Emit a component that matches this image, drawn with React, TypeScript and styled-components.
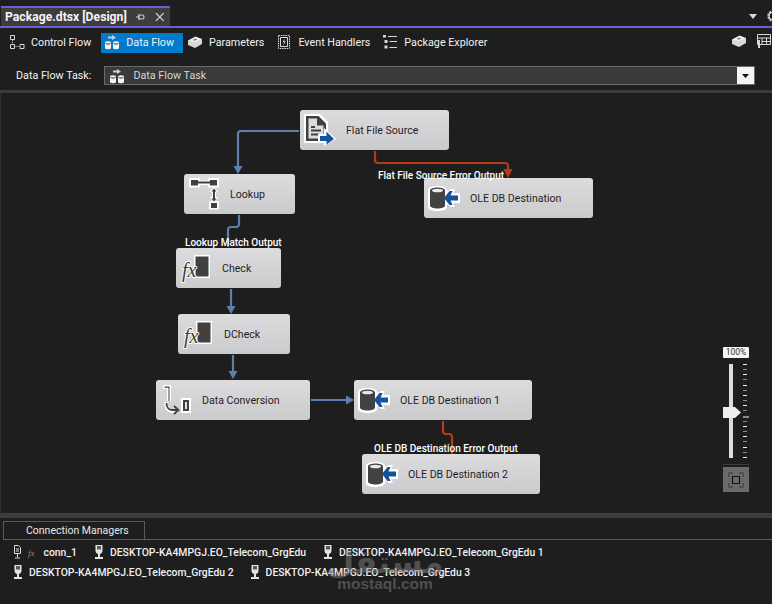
import { FC } from "react";
import styled, { createGlobalStyle } from "styled-components";

const GlobalStyle = createGlobalStyle`
  html, body {
    margin: 0;
    padding: 0;
    background: #1e1e1e;
  }
  body {
    font-family: Roboto, "Liberation Sans", sans-serif;
    font-size: 10.75px;
    color: #f1f1f1;
  }
`;

const Window = styled.div`
  position: relative;
  width: 772px;
  height: 604px;
  overflow: hidden;
  display: flex;
  flex-direction: column;
  background: #1e1e1e;
`;

const TabStrip = styled.div`
  height: 28px;
  box-sizing: border-box;
  padding: 6px 0 0 1px;
  display: flex;
  align-items: flex-end;
  justify-content: space-between;
  border-bottom: 2px solid #6b5fd6;
`;

const Tab = styled.div`
  width: 169px;
  height: 20px;
  box-sizing: border-box;
  padding: 0 4px;
  display: flex;
  align-items: center;
  gap: 9px;
  background: #3d3d3d;
  border-top: 2px solid #6b5fd6;
`;

const TabTitle = styled.span`
  flex: 1;
  font-weight: 700;
  font-size: 12.2px;
  white-space: nowrap;
  color: #f4f4f4;
`;

const StripTools = styled.div`
  width: 23px;
  height: 20px;
  display: flex;
  align-items: center;
  gap: 9px;
  overflow: hidden;
  flex-shrink: 0;
`;

const Toolbar = styled.div`
  height: 30px;
  padding-left: 6px;
  display: flex;
  align-items: center;
  gap: 1px;
`;

const ToolButton = styled.div<{ $active?: boolean }>`
  height: 20px;
  box-sizing: border-box;
  margin-left: ${(props) => (props.$active ? 1 : 0)}px;
  padding: 0 ${(props) => (props.$active ? 9 : 8)}px 2px 3px;
  display: flex;
  align-items: center;
  gap: 6px;
  white-space: nowrap;
  background: ${(props) => (props.$active ? "#007acc" : "transparent")};
`;

const ToolbarEnd = styled.div`
  margin-left: auto;
  margin-bottom: 4px;
  display: flex;
  align-items: center;
  gap: 9px;
`;

const TaskRow = styled.div`
  height: 32px;
  box-sizing: border-box;
  padding: 3px 17px 0 16px;
  display: flex;
  align-items: center;
  gap: 13px;
`;

const ComboBox = styled.div`
  flex: 1;
  height: 19px;
  box-sizing: border-box;
  padding-left: 4px;
  display: flex;
  align-items: center;
  gap: 8px;
  background: #3a3a3a;
  border: 1px solid #6a6a6a;
  color: #d4d4d4;
`;

const ComboArrow = styled.div`
  margin-left: auto;
  width: 17px;
  height: 17px;
  display: flex;
  align-items: center;
  justify-content: center;
  background: #f5f5f5;
`;

const Splitter = styled.div<{ $height: number }>`
  height: ${(props) => props.$height}px;
  background: #3a3d3f;
  flex-shrink: 0;
`;

const Canvas = styled.div`
  position: relative;
  flex: 1;
  border-left: 1px solid #2d2d30;
`;

const Wires = styled.svg`
  position: absolute;
  left: -1px;
  top: 0;
`;

const Node = styled.div<{ $x: number; $y: number; $w: number }>`
  position: absolute;
  left: ${(props) => props.$x - 1}px;
  top: ${(props) => props.$y - 93}px;
  width: ${(props) => props.$w}px;
  height: 40px;
  box-sizing: border-box;
  padding-left: 4px;
  display: flex;
  align-items: center;
  gap: 10px;
  border-radius: 3px;
  background: linear-gradient(#dcdcdf, #cbcbce);
  color: #1e1e1e;
  font-size: 10.6px;
  white-space: nowrap;
`;

const WireLabel = styled.div<{ $x: number; $y: number }>`
  position: absolute;
  left: ${(props) => props.$x - 1}px;
  top: ${(props) => props.$y - 93}px;
  font-size: 10px;
  line-height: 12px;
  font-weight: 500;
  white-space: nowrap;
  color: #ffffff;
`;

const ZoomControl = styled.div`
  position: absolute;
  left: 722px;
  top: 254px;
  width: 26px;
  display: flex;
  flex-direction: column;
  align-items: stretch;
`;

const ZoomValue = styled.div`
  height: 11px;
  background: #f6f6f6;
  border-radius: 1px;
  color: #333;
  font-size: 8.5px;
  line-height: 11px;
  text-align: center;
`;

const SliderBody = styled.div`
  position: relative;
  height: 94px;
  margin-top: 6px;
`;

const SliderTrack = styled.div`
  position: absolute;
  left: 6px;
  top: 0;
  bottom: 0;
  width: 4px;
  background: #dcdcdc;
`;

const SliderThumb = styled.svg`
  position: absolute;
  left: 0;
  top: 43px;
`;

const Ticks = styled.div`
  position: absolute;
  left: 20px;
  top: 0;
  bottom: 0;
  display: flex;
  flex-direction: column;
  justify-content: space-between;
`;

const Tick = styled.div<{ $major?: boolean; $end?: boolean }>`
  height: 1px;
  width: ${(props) => (props.$major ? 6 : 4)}px;
  background: ${(props) => (props.$major ? "#8a8a8a" : props.$end ? "#eeeeee" : "#8a8a8a")};
  box-shadow: ${(props) => (props.$major ? "0 1px 0 #8a8a8a" : "none")};
`;

const ZoomRule = styled.div`
  height: 1px;
  margin-top: 6px;
  background: #3c3c3c;
`;

const FitButton = styled.div`
  height: 25px;
  margin-top: 2px;
  display: flex;
  align-items: center;
  justify-content: center;
  background: #6b6b6b;
`;

const ManagersPanel = styled.div`
  height: 86px;
  flex-shrink: 0;
  box-sizing: border-box;
  padding: 3px 0 0 3px;
`;

const ManagersTab = styled.div`
  width: 142px;
  height: 18px;
  box-sizing: border-box;
  padding-left: 22px;
  border: 1px solid #5a5a5a;
  border-bottom: none;
  font-size: 10.5px;
  line-height: 17px;
  color: #e6e6e6;
`;

const ManagersList = styled.div`
  border-top: 1px solid #5a5a5a;
  padding: 2px 0 0 10px;
  display: flex;
  flex-direction: column;
`;

const ManagerRow = styled.div`
  height: 20px;
  display: flex;
  align-items: center;
`;

const Manager = styled.div<{ $after: number }>`
  display: flex;
  align-items: center;
  gap: 6px;
  margin-right: ${(props) => props.$after}px;
  white-space: nowrap;
  font-weight: 500;
  font-size: 10.4px;
`;

const FxMark = styled.span`
  font-family: "Liberation Serif", serif;
  font-style: italic;
  font-size: 9px;
  color: #8a8a8a;
  margin-right: 9px;
`;

const Watermark = styled.div`
  position: absolute;
  left: 338px;
  top: 547px;
  width: 94px;
  display: flex;
  flex-direction: column;
  align-items: center;
  color: rgba(130, 130, 130, 0.5);
  pointer-events: none;
`;

const WatermarkArabic = styled.span`
  font-family: "DejaVu Sans", sans-serif;
  font-size: 32px;
  font-weight: 700;
  line-height: 30px;
`;

const WatermarkLatin = styled.span`
  font-family: "Liberation Sans", sans-serif;
  font-size: 15.5px;
  font-weight: 700;
  line-height: 14px;
`;

const PinIcon: FC = () => (
  <svg width="10" height="10" viewBox="0 0 10 10">
    <path d="M0 5h3M3 3h5v4H3zM3 2v6M8 5h1" stroke="#d0d0d0" fill="none" />
  </svg>
);

const CloseIcon: FC = () => (
  <svg width="12" height="12" viewBox="0 0 12 12">
    <path d="M2 2l8 8M10 2l-8 8" stroke="#d8d8d8" strokeWidth="1.3" />
  </svg>
);

const ControlFlowIcon: FC = () => (
  <svg width="16" height="16" viewBox="0 0 16 16" fill="none" stroke="#d8d8d8">
    <path d="M1.500 1.500h4v4h-4zM1.500 10.500h4v4h-4zM11 10.500h4v4h-4z" />
    <path d="M3.500 6v4M6.500 12.500h3.500" strokeDasharray="1 1" />
  </svg>
);

const DataFlowIcon: FC = () => (
  <svg width="16" height="16" viewBox="0 0 16 16">
    <path d="M4 2.500h4V1l4 2.500L8 6V4.500H4z" fill="#cfcfcf" />
    <path d="M1 8.500a3 1.300 0 0 1 6 0v5.500a3 1.300 0 0 1-6 0zM9 8.500a3 1.300 0 0 1 6 0v5.500a3 1.300 0 0 1-6 0z" fill="#f2f2f2" />
    <path d="M1.500 9.300c1 1 4 1 5 0M9.500 9.300c1 1 4 1 5 0" stroke="#333" fill="none" />
  </svg>
);

const ParamsIcon: FC = () => (
  <svg width="16" height="16" viewBox="0 0 16 16">
    <path d="M1 6.500L8.500 2.500 15 5v5l-7 4-7-3z" fill="#d8d8d8" />
    <path d="M1.500 6.500L8.500 3 14 5 8 8z" fill="#f4f4f4" />
    <path d="M5.500 6l3-1.500 2 .8-3 1.500z" fill="#777" />
  </svg>
);

const EventIcon: FC = () => (
  <svg width="16" height="16" viewBox="0 0 16 16">
    <path d="M2.500 1.500h11v13h-11z" fill="#1e1e1e" stroke="#dcdcdc" strokeDasharray="1.500 .8" />
    <path d="M4.500 3.500h7v9h-7z" fill="none" stroke="#dcdcdc" />
    <path d="M9 4.500L6.500 8h1.800L7 11.500 9.800 7.500H8z" fill="#e8e8e8" />
  </svg>
);

const ExplorerIcon: FC = () => (
  <svg width="16" height="16" viewBox="0 0 16 16" fill="#d8d8d8">
    <path d="M1 1h3v2.500H1zM6 2h9v1H6zM2.500 6H5.500v3h-3zM7.500 7h7.500v1H7.500zM2.500 11.500H5.500v3h-3zM7.500 13h7.500v1H7.500z" />
  </svg>
);

const TableIcon: FC = () => (
  <svg width="16" height="16" viewBox="0 0 16 16" fill="none" stroke="#d8d8d8">
    <path d="M1.500 1.500h13v10h-13zM1.500 5h13M6 5v6.500M10.500 5v6.500M6 8.500h8.500" />
    <path d="M3 7v8" strokeWidth="2" />
  </svg>
);

const SourceIcon: FC = () => (
  <svg width="32" height="32" viewBox="0 0 32 32">
    <path d="M0 0h16l8 8v21H0z" fill="#fff" />
    <path d="M2 2h12.500l7.500 7.500V27H2z" fill="#404040" />
    <path d="M4.500 4.500h8.500v7h6.500v13h-15z" fill="#dcdcdf" />
    <path d="M7 12h4v2H7zM7 15.500h10v2H7zM7 19.500h8v2H7z" fill="#404040" />
    <path d="M14 20h6v-6l12 11-12 7v-5h-6z" fill="#fff" />
    <path d="M16 22h6.500v-4.500L30 25l-7.500 5.500V27H16z" fill="#14539c" />
  </svg>
);

const DestinationIcon: FC = () => (
  <svg width="32" height="32" viewBox="0 0 32 32">
    <path d="M0 8c0-5.500 19-5.500 19 0l1 1 3-2h4l-2 4h7v10h-7l2 4h-4l-4-3v3c0 5.500-19 5.500-19 0z" fill="#fff" />
    <path d="M2 8.500c0-4 15-4 15 0v15c0 4-15 4-15 0z" fill="#424242" />
    <ellipse cx="9.500" cy="8.500" rx="5.500" ry="1.800" fill="#e8e8e8" />
    <path d="M30 13.500h-7.500L24.500 9h-3L16 16l5.500 7h3l-2-4.500H30z" fill="#14539c" />
  </svg>
);

const LookupIcon: FC = () => (
  <svg width="32" height="32" viewBox="0 0 32 32">
    <path d="M1 0h11v2.500h8V0h11v9.500H20V7h-8v2.500H1zM21 23h10v8.500H21z" fill="#fff" />
    <path d="M3 2h7v5.500H3zM22 2h7v5.500h-7zM9 3.500h14v2H9zM23 25h6v5h-6z" fill="#404040" />
    <path d="M26 9l4.500 5H28v5h2.500L26 24l-4.500-5H24v-5h-2.500z" fill="#fff" />
    <path d="M26 10.500l2.500 3H27v7h1.500L26 23.500 23.500 20.500H25v-7h-1.500z" fill="#404040" />
  </svg>
);

const DerivedIcon: FC = () => (
  <svg width="32" height="32" viewBox="0 0 32 32">
    <path d="M14 3h16v23H14z" fill="#fff" />
    <path d="M15.500 4.500h13v20h-13z" fill="#404040" />
    <text
      x="2"
      y="25"
      fontFamily="Liberation Serif, serif"
      fontStyle="italic"
      fontSize="20"
      fill="#3c3c3c"
      stroke="#ffffff"
      strokeWidth="1.800"
      paintOrder="stroke"
    >
      fx
    </text>
  </svg>
);

const ConvertIcon: FC = () => (
  <svg width="32" height="32" viewBox="0 0 32 32">
    <path d="M3 1h8v16H7V5H3z" fill="#fff" />
    <path d="M4.500 2.500h5V17H8.500V3.800h-4z" fill="#404040" />
    <path d="M6 18c0 6 2 9 6 9h6" fill="none" stroke="#fff" strokeWidth="3.600" />
    <path d="M6.500 19c0 4 2 7 5.500 7h5" fill="none" stroke="#404040" strokeWidth="1.800" />
    <path d="M14 22l4.500 4-4.500 4" fill="none" stroke="#404040" strokeWidth="1.800" />
    <path d="M21 14h10v15H21z" fill="#fff" />
    <path d="M23 16h6v11h-6z" fill="#404040" />
    <path d="M25 18h2v7h-2z" fill="#dcdcdf" />
  </svg>
);

const GlassIcon: FC = () => (
  <svg width="10" height="14" viewBox="0 0 10 14">
    <path d="M1.500 0h7v6c0 2-2 3-2.500 3v3h3v2h-8v-2h3V9C3.500 9 1.500 8 1.500 6z" fill="#e4e4e4" />
    <path d="M3 1h4v3.500H3z" fill="#5a5a5a" />
  </svg>
);

const FileConnIcon: FC = () => (
  <svg width="9" height="14" viewBox="0 0 9 14" fill="none" stroke="#dcdcdc">
    <path d="M1.500 .5h4l2 2v6h-6zM3 4h3M3 6h3M4.500 9v3M2 13h5" />
  </svg>
);

const GearIcon: FC = () => (
  <svg width="14" height="14" viewBox="0 0 14 14" style={{ flexShrink: 0 }}>
    <circle cx="7" cy="7" r="4.500" fill="none" stroke="#d0d0d0" strokeWidth="2.500" strokeDasharray="2 .8" />
    <circle cx="7" cy="7" r="4" fill="none" stroke="#d0d0d0" />
  </svg>
);

const nodes = [
  { name: "Flat File Source", x: 300, y: 110, w: 149, icon: <SourceIcon /> },
  { name: "Lookup", x: 184, y: 174, w: 111, icon: <LookupIcon /> },
  { name: "OLE DB Destination", x: 424, y: 178, w: 169, icon: <DestinationIcon /> },
  { name: "Check", x: 176, y: 248, w: 105, icon: <DerivedIcon /> },
  { name: "DCheck", x: 178, y: 314, w: 112, icon: <DerivedIcon /> },
  { name: "Data Conversion", x: 156, y: 380, w: 154, icon: <ConvertIcon /> },
  { name: "OLE DB Destination 1", x: 354, y: 380, w: 178, icon: <DestinationIcon /> },
  { name: "OLE DB Destination 2", x: 362, y: 454, w: 178, icon: <DestinationIcon /> },
];

const wireLabels = [
  { text: "Flat File Source Error Output", x: 378, y: 170 },
  { text: "Lookup Match Output", x: 185, y: 237 },
  { text: "OLE DB Destination Error Output", x: 374, y: 443 },
];

const BLUE = "#5f7fae";
const RED = "#b63a14";

const ConnectorLines: FC = () => (
  <Wires width="772" height="420" viewBox="0 93 772 420" fill="none" strokeWidth="2.200">
    <path d="M299 131H241q-3 0-3 3V168" stroke={BLUE} />
    <path d="M233.500 166h9l-4.500 8z" fill={BLUE} />
    <path d="M239 215v9q0 3-3 3h-5q-3 0-3 3v17" stroke={BLUE} />
    <path d="M231 289v19" stroke={BLUE} />
    <path d="M226.500 306h9l-4.500 8z" fill={BLUE} />
    <path d="M233 355v18" stroke={BLUE} />
    <path d="M228.500 371h9l-4.500 8z" fill={BLUE} />
    <path d="M311 400h36" stroke={BLUE} />
    <path d="M346 395.500v9l8-4.500z" fill={BLUE} />
    <path d="M375 151v9q0 3 3 3h127q3 0 3 3v6" stroke={RED} />
    <path d="M503.500 169h9l-4.500 9z" fill={RED} />
    <path d="M443 421v10q0 3 3 3h3q3 0 3 3v17" stroke={RED} />
  </Wires>
);

const ZoomSlider: FC = () => (
  <ZoomControl>
    <ZoomValue>100%</ZoomValue>
    <SliderBody>
      <SliderTrack />
      <SliderThumb width="18" height="11" viewBox="0 0 18 11">
        <path d="M0 0h12l6 5.500-6 5.500H0z" fill="#efefef" />
      </SliderThumb>
      <Ticks>
        {Array.from({ length: 19 }).map((_, i) => (
          <Tick key={i} $major={i === 10} $end={i % 2 === 0} />
        ))}
      </Ticks>
    </SliderBody>
    <ZoomRule />
    <FitButton>
      <svg width="16" height="16" viewBox="0 0 16 16" fill="none">
        <path d="M1 5V1h4M11 1h4v4M15 11v4h-4M5 15H1v-4" stroke="#4a4a4a" strokeWidth="1.600" />
        <path d="M4.500 4.500h7v7h-7z" stroke="#141414" strokeWidth="1.200" />
      </svg>
    </FitButton>
  </ZoomControl>
);

export default function App() {
  return (
    <Window>
      <GlobalStyle />
      <TabStrip>
        <Tab>
          <TabTitle>Package.dtsx [Design]</TabTitle>
          <PinIcon />
          <CloseIcon />
        </Tab>
        <StripTools>
          <svg width="8" height="5" viewBox="0 0 8 5" style={{ flexShrink: 0 }}>
            <path d="M0 0h8L4 5z" fill="#d8d8d8" />
          </svg>
          <GearIcon />
        </StripTools>
      </TabStrip>

      <Toolbar>
        <ToolButton>
          <ControlFlowIcon />
          Control Flow
        </ToolButton>
        <ToolButton $active>
          <DataFlowIcon />
          Data Flow
        </ToolButton>
        <ToolButton>
          <ParamsIcon />
          Parameters
        </ToolButton>
        <ToolButton>
          <EventIcon />
          Event Handlers
        </ToolButton>
        <ToolButton>
          <ExplorerIcon />
          Package Explorer
        </ToolButton>
        <ToolbarEnd>
          <ParamsIcon />
          <TableIcon />
        </ToolbarEnd>
      </Toolbar>

      <TaskRow>
        Data Flow Task:
        <ComboBox>
          <DataFlowIcon />
          Data Flow Task
          <ComboArrow>
            <svg width="7" height="4" viewBox="0 0 7 4">
              <path d="M0 0h7L3.500 4z" fill="#111" />
            </svg>
          </ComboArrow>
        </ComboBox>
      </TaskRow>

      <Splitter $height={3} />

      <Canvas>
        <ConnectorLines />
        {nodes.map((node) => (
          <Node key={node.name} $x={node.x} $y={node.y} $w={node.w}>
            {node.icon}
            {node.name}
          </Node>
        ))}
        {wireLabels.map((label) => (
          <WireLabel key={label.text} $x={label.x} $y={label.y}>
            {label.text}
          </WireLabel>
        ))}
        <ZoomSlider />
      </Canvas>

      <Splitter $height={5} />

      <ManagersPanel>
        <ManagersTab>Connection Managers</ManagersTab>
        <ManagersList>
          <ManagerRow>
            <Manager $after={17}>
              <FileConnIcon />
              <span>
                <FxMark>fx</FxMark>conn_1
              </span>
            </Manager>
            <Manager $after={17}>
              <GlassIcon />
              DESKTOP-KA4MPGJ.EO_Telecom_GrgEdu
            </Manager>
            <Manager $after={0}>
              <GlassIcon />
              DESKTOP-KA4MPGJ.EO_Telecom_GrgEdu 1
            </Manager>
          </ManagerRow>
          <ManagerRow>
            <Manager $after={16}>
              <GlassIcon />
              DESKTOP-KA4MPGJ.EO_Telecom_GrgEdu 2
            </Manager>
            <Manager $after={0}>
              <GlassIcon />
              DESKTOP-KA4MPGJ.EO_Telecom_GrgEdu 3
            </Manager>
          </ManagerRow>
        </ManagersList>
      </ManagersPanel>

      <Watermark>
        <WatermarkArabic>مستقل</WatermarkArabic>
        <WatermarkLatin>mostaql.com</WatermarkLatin>
      </Watermark>
    </Window>
  );
}
